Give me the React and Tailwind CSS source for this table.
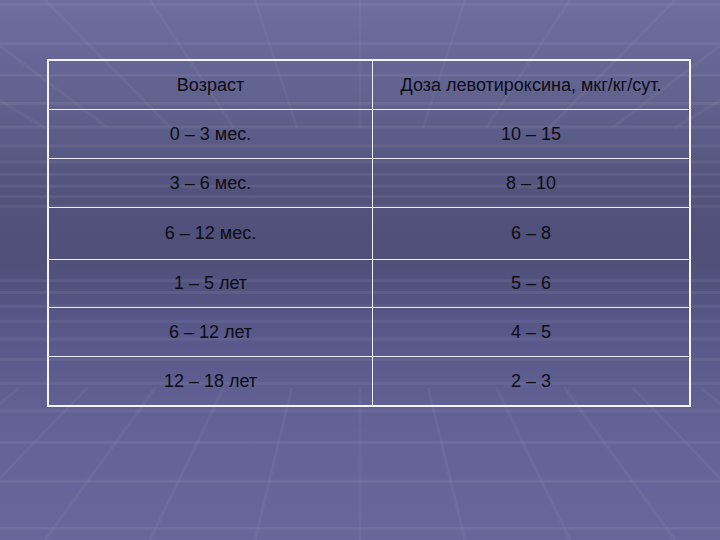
import React from "react";

const rows = [
  ["0 – 3 мес.", "10 – 15", "h-[49px]"],
  ["3 – 6 мес.", "8 – 10", "h-[49px]"],
  ["6 – 12 мес.", "6 – 8", "h-[52px]"],
  ["1 – 5 лет", "5 – 6", "h-[48px]"],
  ["6 – 12 лет", "4 – 5", "h-[49px]"],
  ["12 – 18 лет", "2 – 3", "h-[49px]"],
];

function GridBackdrop() {
  const vx = 360;
  const vy = 238;
  const ceiling = [3, 3.6, 4.3, 5.2, 6.3, 7.6, 9.2, 11, 13.5, 17, 22];
  const floor = [3.1, 3.7, 4.4, 5.2, 6.2, 7.4, 8.9, 10.8, 13.2, 16.5, 21];
  const spokes = [];
  for (let k = -9; k <= 9; k++) spokes.push(vx + k * 105);

  return (
    <svg
      className="absolute inset-0 h-full w-full"
      viewBox="0 0 720 540"
      preserveAspectRatio="none"
    >
      <defs>
        <linearGradient id="bg" x1="0" y1="0" x2="0" y2="1">
          <stop offset="0" stopColor="#6d6da1" />
          <stop offset="0.18" stopColor="#62628f" />
          <stop offset="0.35" stopColor="#53537e" />
          <stop offset="0.47" stopColor="#4f4f79" />
          <stop offset="0.62" stopColor="#58588a" />
          <stop offset="0.8" stopColor="#636397" />
          <stop offset="1" stopColor="#67679b" />
        </linearGradient>
      </defs>
      <rect width="720" height="540" fill="url(#bg)" />
      <g stroke="#ffffff" strokeOpacity="0.06" strokeWidth="3">
        {ceiling.map((z, i) => (
          <line key={"c" + i} x1="0" x2="720" y1={vy - 700 / z} y2={vy - 700 / z} />
        ))}
        {floor.map((z, i) => (
          <line key={"f" + i} x1="0" x2="720" y1={vy + 900 / z} y2={vy + 900 / z} />
        ))}
      </g>
      <g stroke="#ffffff" strokeOpacity="0.045" strokeWidth="3">
        {spokes.map((x, i) => (
          <line key={"t" + i} x1={x} y1="0" x2={vx + (x - vx) * 0.6} y2={vy - 110} />
        ))}
        {spokes.map((x, i) => (
          <line key={"b" + i} x1={x} y1="540" x2={vx + (x - vx) * 0.65} y2={vy + 150} />
        ))}
      </g>
    </svg>
  );
}

export default function App() {
  return (
    <div
      className="relative h-[540px] w-[720px] overflow-hidden bg-[#5a5a88]"
      style={{ fontFamily: '"Liberation Sans", Arial, sans-serif' }}
    >
      <GridBackdrop />
      <div className="relative pl-[47px] pt-[59px]">
        <div className="w-[644px] border-2 border-[#f4f4fb] text-[18px] text-[#0c0c14]">
          <div className="grid h-[48px] grid-cols-[324px_1fr]">
            <div className="flex items-center justify-center border-r border-[#eeeef8]">
              Возраст
            </div>
            <div className="flex items-center justify-center">
              Доза левотироксина, мкг/кг/сут.
            </div>
          </div>
          {rows.map(([age, dose, h]) => (
            <div
              key={age}
              className={"grid grid-cols-[324px_1fr] border-t border-[#eeeef8] " + h}
            >
              <div className="flex items-center justify-center border-r border-[#eeeef8]">
                {age}
              </div>
              <div className="flex items-center justify-center">{dose}</div>
            </div>
          ))}
        </div>
      </div>
    </div>
  );
}
